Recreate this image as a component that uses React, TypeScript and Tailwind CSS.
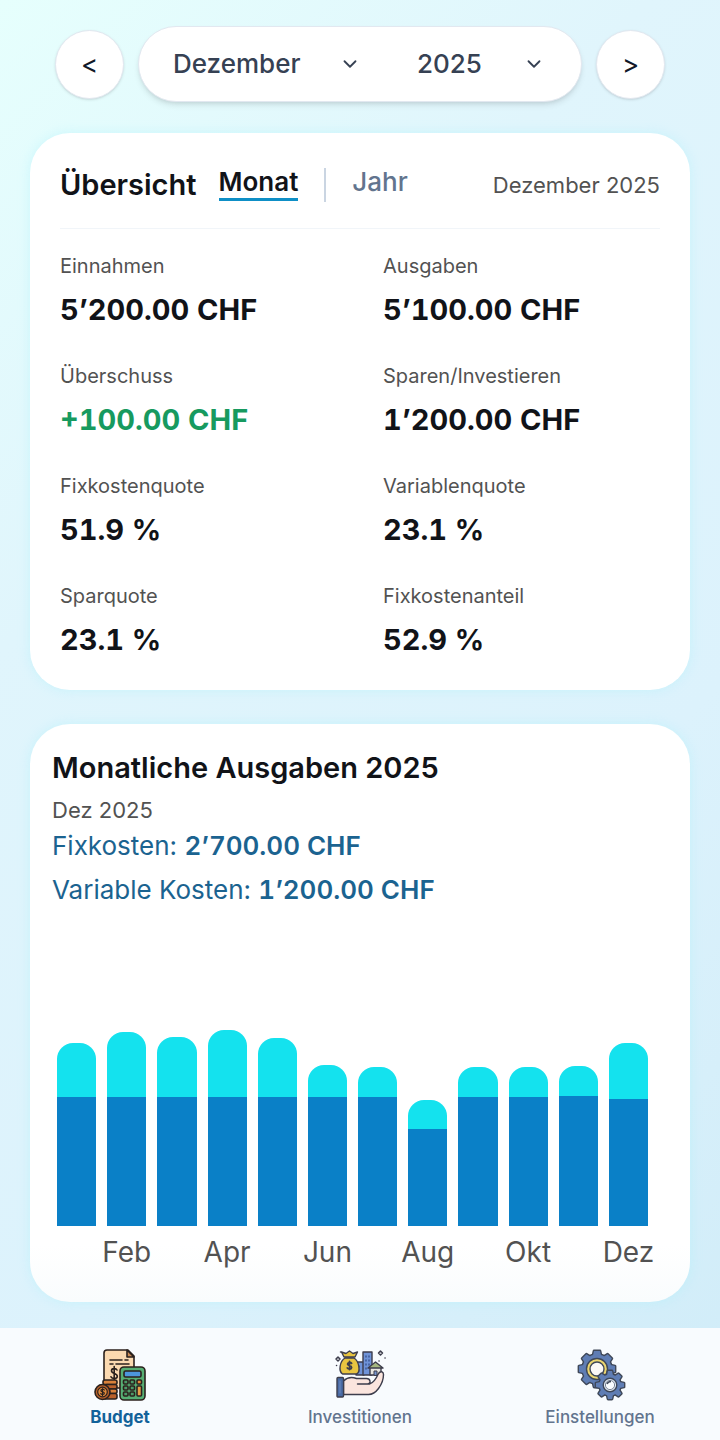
import { ChevronDown } from 'lucide-react';

interface MonthEntry {
    month: string;
    fixed: number;
    variable: number;
}

const MONTHS = [
    'Januar', 'Februar', 'März', 'April', 'Mai', 'Juni',
    'Juli', 'August', 'September', 'Oktober', 'November', 'Dezember',
];

const stats = [
    { label: 'Einnahmen', value: '5’200.00 CHF' },
    { label: 'Ausgaben', value: '5’100.00 CHF' },
    { label: 'Überschuss', value: '+100.00 CHF', positive: true },
    { label: 'Sparen/Investieren', value: '1’200.00 CHF' },
    { label: 'Fixkostenquote', value: '51.9 %' },
    { label: 'Variablenquote', value: '23.1 %' },
    { label: 'Sparquote', value: '23.1 %' },
    { label: 'Fixkostenanteil', value: '52.9 %' },
];

const expenses: MonthEntry[] = [
    { month: 'Jan', fixed: 2750, variable: 1150 },
    { month: 'Feb', fixed: 2750, variable: 1380 },
    { month: 'Mär', fixed: 2750, variable: 1270 },
    { month: 'Apr', fixed: 2750, variable: 1425 },
    { month: 'Mai', fixed: 2750, variable: 1255 },
    { month: 'Jun', fixed: 2750, variable: 680 },
    { month: 'Jul', fixed: 2750, variable: 640 },
    { month: 'Aug', fixed: 2060, variable: 620 },
    { month: 'Sep', fixed: 2750, variable: 640 },
    { month: 'Okt', fixed: 2750, variable: 640 },
    { month: 'Nov', fixed: 2770, variable: 640 },
    { month: 'Dez', fixed: 2700, variable: 1200 },
];

const PX_PER_CHF = 0.047;

function BudgetIcon() {
    return (
        <svg viewBox="0 0 54 54" className="size-[54px]" stroke="#2b211d" strokeWidth="1.6" strokeLinejoin="round" strokeLinecap="round" aria-hidden="true">
            <path d="M14 2h21l6 6v32H11V5q0-3 3-3z" fill="#fbd9b0" />
            <path d="M34 2v7h7z" fill="#c98a55" />
            <path d="M17 12h12M32 12h3M17 16h3M23 16h13" fill="none" />
            <path d="M24 22c-1-2-5.500-2-5.500.8 0 3.200 5.800 2 5.800 5.400 0 3-5 3-6.300.6M21.200 18.500v13" fill="none" />
            <rect x="10" y="32" width="14" height="4.500" rx="2" fill="#d9813a" />
            <rect x="12" y="36.500" width="12" height="4.500" rx="2" fill="#b9602a" />
            <rect x="11" y="41" width="13" height="4.500" rx="2" fill="#d9813a" />
            <rect x="10" y="45.500" width="14" height="5.500" rx="2" fill="#b9602a" />
            <circle cx="9.500" cy="44" r="7.500" fill="#b9602a" />
            <circle cx="9.500" cy="44" r="4.800" fill="#e08a3c" strokeWidth="1.200" />
            <path d="M11.300 42c-1-1.300-3.600-.9-3.400.6.200 1.500 3.400.9 3.400 2.700 0 1.400-2.600 1.700-3.600.4M9.500 40.500v7" fill="none" strokeWidth="1.200" />
            <rect x="27" y="19" width="25" height="33" rx="4" fill="#56ae73" />
            <rect x="31" y="23" width="17" height="6" rx="1.500" fill="#4d96dd" />
            {[32, 38, 44].map((y) => (
                <g key={y} strokeWidth="1.600">
                    <rect x="30.500" y={y} width="4.500" height="4" rx="1" fill="#4c9b68" />
                    <rect x="37" y={y} width="4.500" height="4" rx="1" fill="#4c9b68" />
                </g>
            ))}
            <rect x="44" y="32" width="4.500" height="4" rx="1" fill="#e5883c" strokeWidth="1.600" />
            <rect x="44" y="38" width="4.500" height="10" rx="1" fill="#e5a04a" strokeWidth="1.600" />
        </svg>
    );
}

function InvestIcon() {
    return (
        <svg viewBox="0 0 54 54" className="size-[54px]" stroke="#3d3d4c" strokeWidth="1.400" strokeLinejoin="round" strokeLinecap="round" aria-hidden="true">
            <rect x="23" y="14" width="8" height="13" fill="#6f93d8" />
            <rect x="30" y="4" width="9" height="23" fill="#6f93d8" />
            <path d="M33 8v1M36 8v1M33 12v1M36 12v1M33 16v1M36 16v1M33 20v1M26 18v1M26 22v1" stroke="#3a5590" />
            <path d="M12 10h9c5 3 7 14 2.500 16h-14C5 23 7 13 12 10z" fill="#e8c440" />
            <path d="M11 9 8.500 4l4.500 1.500L16.500 3 20 5.500 24.500 4 22 9z" fill="#e8c440" />
            <path d="M18.600 15.300c-1.200-1.400-4.200-1-4 .9.200 1.700 4 1.100 4 3.200 0 1.900-3 2.200-4.300.6M16.500 13.500v8" fill="none" strokeWidth="1.800" />
            <path d="M37 20v7h11v-7" fill="#e8e6e0" />
            <path d="m35 20 7.500-6L50 20z" fill="#a4b67f" />
            <path d="M41 27v-4h3v4z" fill="#7897cf" strokeWidth="1" />
            <path d="M10.500 33c4-4 8-4.500 13-2.500h10c4 0 5 5 1 5.500h-10 12c4-1 7-6 9-10.500 2-3 5-2 5 1 0 5-2 10-5 14s-6 6-10 6h-25z" fill="#fbe5de" />
            <rect x="4" y="29.500" width="6.500" height="19.500" rx="1" fill="#4a6ba5" />
            <path d="M7 33v12" stroke="#6e8bc0" strokeWidth="1" />
            <path d="m5 9 2 2-2 2-2-2zM47.500 3l2 2-2 2-2-2zM52 10h.1M46 13h.1M7.500 4h.1M3.500 17.500h.1" fill="none" strokeWidth="1.500" />
        </svg>
    );
}

interface GearProps {
    cx: number;
    cy: number;
    r: number;
    tooth: number;
}

function Gear({ cx, cy, r, tooth }: GearProps) {
    const shape = (
        <>
            <circle cx={cx} cy={cy} r={r} />
            {[0, 45, 90, 135, 180, 225, 270, 315].map((deg) => (
                <path
                    key={deg}
                    transform={`rotate(${deg} ${cx} ${cy})`}
                    d={`M${cx - tooth} ${cy - r + 1} l1 -4.500 h${tooth * 2 - 2} l1 4.500z`}
                />
            ))}
        </>
    );
    return (
        <g strokeLinejoin="round">
            <g fill="#3f4859" stroke="#3f4859" strokeWidth="2.800">{shape}</g>
            <g fill="#5f7db4">{shape}</g>
        </g>
    );
}

function SettingsIcon() {
    return (
        <svg viewBox="0 0 54 54" className="size-[54px]" aria-hidden="true">
            <Gear cx={24} cy={21} r={14.5} tooth={4} />
            <circle cx="24" cy="21" r="10.500" fill="#ecd670" stroke="#3f4859" strokeWidth="1.400" />
            <circle cx="24" cy="21" r="7" fill="#fbf8f6" stroke="#3f4859" strokeWidth="1.400" />
            <Gear cx={37} cy={37} r={10.5} tooth={3} />
            <circle cx="37" cy="37" r="6.800" fill="#e4ebf3" stroke="#3f4859" strokeWidth="1.400" />
            <circle cx="37" cy="37" r="4.600" fill="#fbfdff" stroke="#7a8496" strokeWidth="1" />
            <path d="M34 36q1-2.500 4-2.500" fill="none" stroke="#3f4859" strokeWidth="1.600" />
        </svg>
    );
}

const navItems = [
    { label: 'Budget', icon: BudgetIcon, active: true },
    { label: 'Investitionen', icon: InvestIcon, active: false },
    { label: 'Einstellungen', icon: SettingsIcon, active: false },
];

function PeriodPicker() {
    const round =
        'size-[69px] shrink-0 rounded-full border border-slate-200 bg-white pt-0.5 text-[26px] leading-8 text-gray-900 shadow-sm';
    const select = 'w-full appearance-none bg-transparent pl-4 text-[26px] leading-9 font-medium text-gray-700 outline-none';
    const chevron = 'pointer-events-none absolute right-0 size-[22px] text-gray-700';

    return (
        <header className="flex items-center gap-[14px] px-[25px]">
            <button type="button" aria-label="Vorheriger Monat" className={round}>&lt;</button>
            <div className="flex h-[76px] flex-1 items-center gap-10 rounded-full border border-slate-200 bg-white pr-[36px] pl-[18px] shadow-md">
                <label className="relative flex flex-[204] items-center">
                    <select aria-label="Monat" defaultValue="Dezember" className={select}>
                        {MONTHS.map((m) => <option key={m}>{m}</option>)}
                    </select>
                    <ChevronDown className={chevron} />
                </label>
                <label className="relative flex flex-[144] items-center">
                    <select aria-label="Jahr" defaultValue="2025" className={select}>
                        {['2024', '2025', '2026'].map((y) => <option key={y}>{y}</option>)}
                    </select>
                    <ChevronDown className={chevron} />
                </label>
            </div>
            <button type="button" aria-label="Nächster Monat" className={round}>&gt;</button>
        </header>
    );
}

function Overview() {
    return (
        <section className="mt-[31px] rounded-[40px] bg-white px-[30px] pb-8 shadow-[0_0_12px_rgba(165,243,252,0.4)]">
            <div className="flex h-24 items-center border-b border-slate-100 pt-2">
                <h1 className="text-[29px] leading-9 font-semibold text-[#111318]">Übersicht</h1>
                <div className="ml-[22px] flex items-center text-[26px] leading-7">
                    <button type="button" className="border-b-[3px] border-[#0e8fc6] pb-0.5 font-semibold text-[#111318]">Monat</button>
                    <span className="ml-[26px] h-[34px] w-0.5 bg-slate-300" />
                    <button type="button" className="ml-[26px] border-b-[3px] border-transparent pb-0.5 font-medium text-slate-500">Jahr</button>
                </div>
                <p className="ml-auto text-[22px] leading-8 text-neutral-600">Dezember 2025</p>
            </div>

            <dl className="grid grid-cols-2 gap-x-[46px] gap-y-8 pt-[21px]">
                {stats.map((s) => (
                    <div key={s.label}>
                        <dt className="text-[20px] leading-8 text-neutral-600">{s.label}</dt>
                        <dd className={`mt-[10px] text-[29px] leading-9 font-bold tabular-nums ${s.positive ? 'text-[#179a5f]' : 'text-[#111318]'}`}>
                            {s.value}
                        </dd>
                    </div>
                ))}
            </dl>
        </section>
    );
}

function MonthlyExpenses() {
    return (
        <section className="mt-[34px] rounded-[40px] bg-white bg-linear-to-b from-white from-90% to-[#f9fcfd] px-[22px] pt-[26px] pb-8 shadow-[0_0_12px_rgba(165,243,252,0.4)]">
            <h2 className="text-[29px] leading-9 font-semibold text-[#111318]">Monatliche Ausgaben 2025</h2>
            <p className="mt-[10px] text-[22px] leading-7 text-neutral-600">Dez 2025</p>
            <div className="text-[26px] leading-[44px] text-[#1b6390]">
                <p>Fixkosten: <strong className="font-semibold tabular-nums">2’700.00 CHF</strong></p>
                <p>Variable Kosten: <strong className="font-semibold tabular-nums">1’200.00 CHF</strong></p>
            </div>

            {/* Stacked bars */}
            <div className="grid h-[358px] grid-cols-12 gap-[11px] pr-5 pl-[5px]">
                {expenses.map((e, i) => (
                    <div key={e.month} className="flex flex-col items-stretch justify-end">
                        <div className="rounded-t-2xl bg-[#14e2ee]" style={{ height: Math.round(e.variable * PX_PER_CHF) }} />
                        <div className="bg-[#0a80c7]" style={{ height: Math.round(e.fixed * PX_PER_CHF) }} />
                        <div className="mt-2 flex h-9 justify-center text-[28px] leading-9 whitespace-nowrap text-neutral-600">
                            {i % 2 === 1 && <span>{e.month}</span>}
                        </div>
                    </div>
                ))}
            </div>
        </section>
    );
}

export default function App() {
    return (
        <div className="flex min-h-screen flex-col bg-[linear-gradient(135deg,#e6fffd_0%,#e0f5fc_30%,#dcf2fc_65%,#d0ecf8_100%)] font-['Inter','Liberation_Sans',sans-serif]">
            <main className="flex-1 px-[30px] pt-[26px] pb-[26px]">
                <PeriodPicker />
                <Overview />
                <MonthlyExpenses />
            </main>

            <nav className="grid grid-cols-3 bg-[#f8fbfe] pt-5 pb-[11px]">
                {navItems.map(({ label, icon: Icon, active }) => (
                    <a
                        key={label}
                        href="#"
                        className={`flex flex-col items-center gap-[3px] text-[17px] leading-6 ${active ? 'font-bold text-[#12629a]' : 'font-medium text-slate-500'}`}
                    >
                        <Icon />
                        {label}
                    </a>
                ))}
            </nav>
        </div>
    );
}
